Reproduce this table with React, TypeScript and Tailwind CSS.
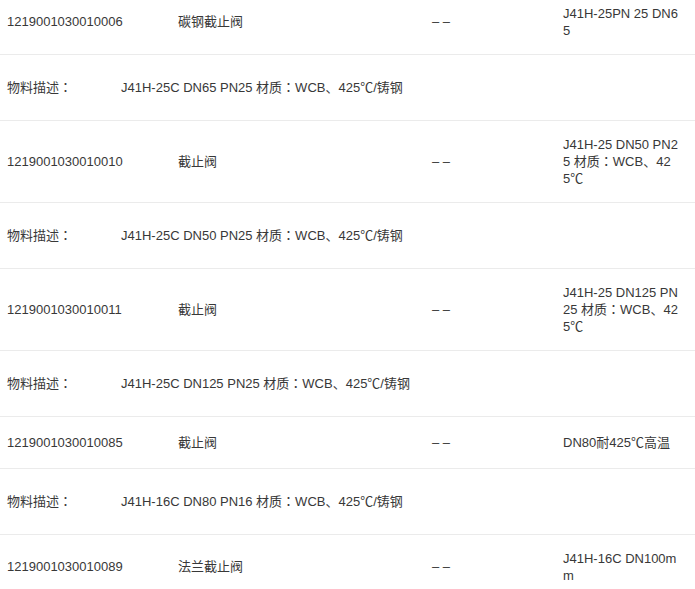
const ROWS = [
  {
    code: "1219001030010006",
    name: "碳钢截止阀",
    spec: "J41H-25PN 25 DN65",
    desc: "J41H-25C DN65 PN25 材质：WCB、425℃/铸钢",
  },
  {
    code: "1219001030010010",
    name: "截止阀",
    spec: "J41H-25 DN50 PN25 材质：WCB、425℃",
    desc: "J41H-25C DN50 PN25 材质：WCB、425℃/铸钢",
  },
  {
    code: "1219001030010011",
    name: "截止阀",
    spec: "J41H-25 DN125 PN25 材质：WCB、425℃",
    desc: "J41H-25C DN125 PN25 材质：WCB、425℃/铸钢",
  },
  {
    code: "1219001030010085",
    name: "截止阀",
    spec: "DN80耐425℃高温",
    desc: "J41H-16C DN80 PN16 材质：WCB、425℃/铸钢",
  },
  {
    code: "1219001030010089",
    name: "法兰截止阀",
    spec: "J41H-16C DN100mm",
    desc: "",
  },
];

export default function App() {
  return (
    <div
      className="w-[695px] h-[589px] overflow-hidden bg-white text-[13px] text-[#383838]"
      style={{ fontFamily: '"Liberation Sans", "Noto Sans CJK JP", "Noto Sans CJK SC", sans-serif' }}
    >
      <div className="-mt-[10px]">
        {ROWS.map((r) => (
          <div key={r.code}>
            {/* main row */}
            <div className="flex items-center min-h-[52px] py-[15px] border-b border-[#ebebeb]">
              <div className="w-[178px] shrink-0 pl-[7px]">{r.code}</div>
              <div className="w-[254px] shrink-0">{r.name}</div>
              <div className="w-[131px] shrink-0">– –</div>
              <div className="w-[116px] shrink-0 break-all leading-[17px]">{r.spec}</div>
            </div>
            {/* description row */}
            {r.desc && (
              <div className="flex items-center h-[66px] border-b border-[#ebebeb]">
                <div className="w-[121px] shrink-0 pl-[7px]">物料描述：</div>
                <div>{r.desc}</div>
              </div>
            )}
          </div>
        ))}
      </div>
    </div>
  );
}
